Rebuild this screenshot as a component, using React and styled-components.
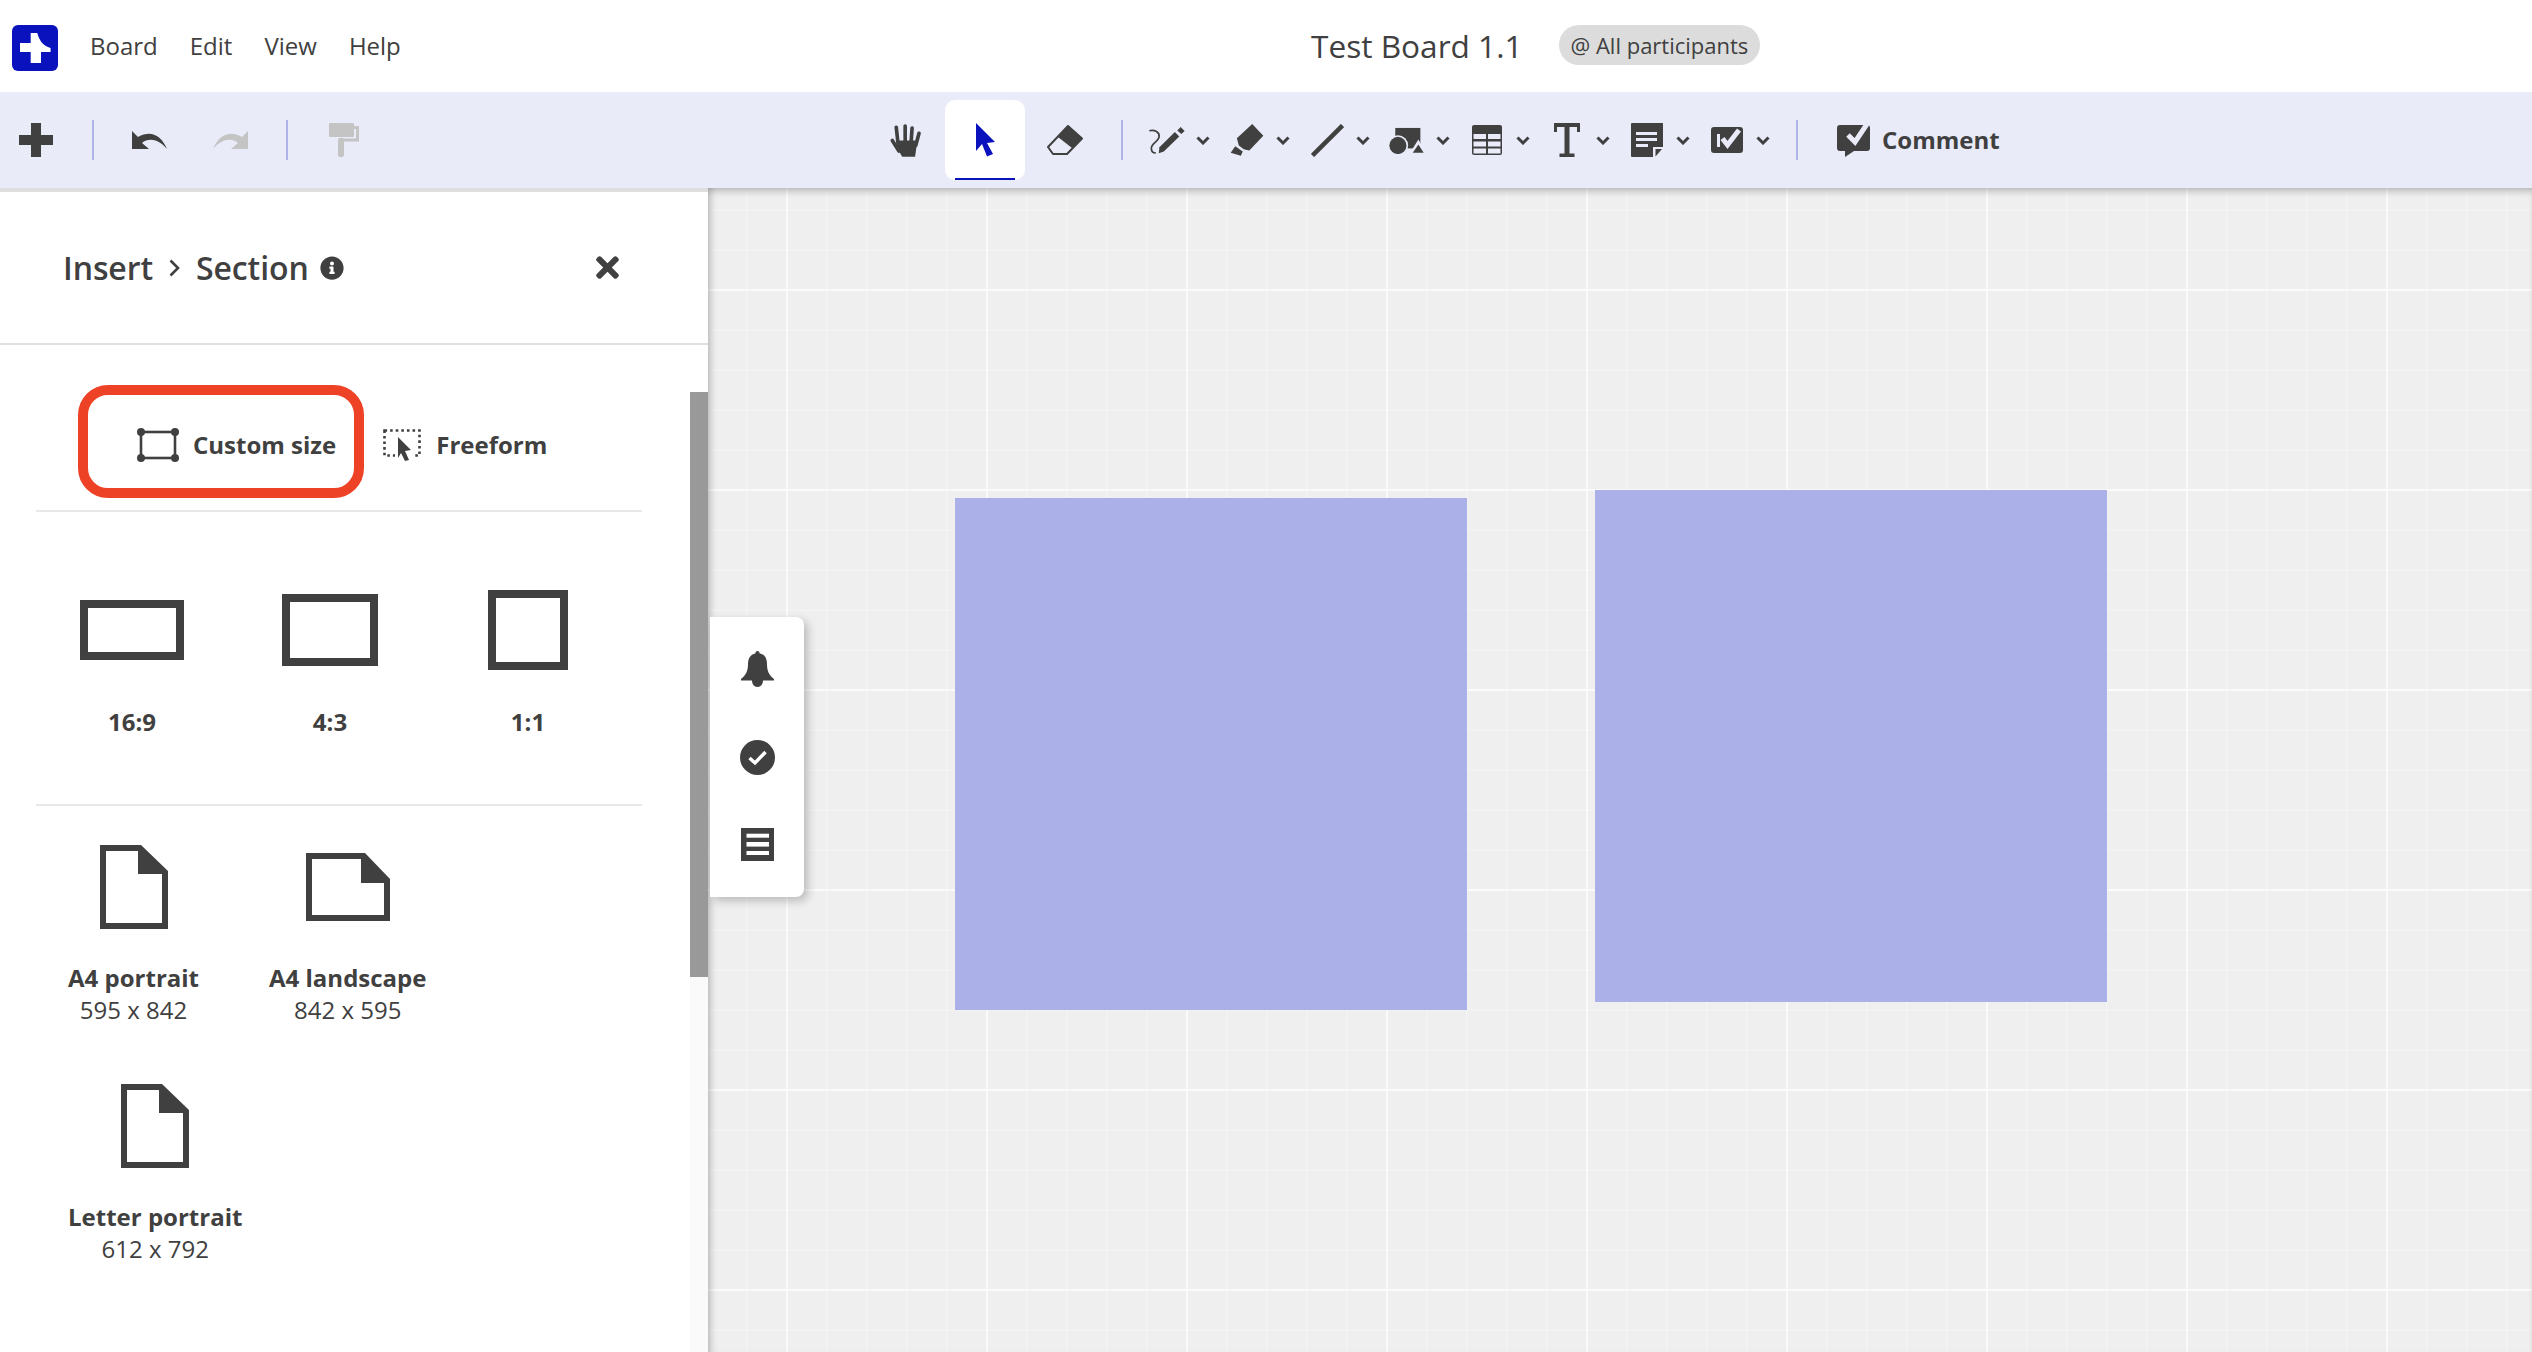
import React from "react";
import styled, { createGlobalStyle } from "styled-components";
import { FaInfoCircle, FaTimes } from "react-icons/fa";

const INK = "#404040";
const MUTED = "#c4c4c4";
const BAND = "#e9ebf9";
const ACCENT = "#0a12bd";
const RULE = "#aeb3e8";

const GlobalStyle = createGlobalStyle`
  html, body {
    margin: 0;
    padding: 0;
    background: #fff;
  }
  body {
    font-family: "Open Sans", "Liberation Sans", sans-serif;
    color: ${INK};
  }
`;

const Page = styled.div`
  width: 2532px;
  height: 1352px;
  display: flex;
  flex-direction: column;
  overflow: hidden;
`;

// barra de cima
const TopBar = styled.header`
  height: 92px;
  flex: none;
  display: flex;
  align-items: center;
  background: #fff;
`;

const Logo = styled.svg`
  margin-left: 12px;
  margin-top: 4px;
  flex: none;
`;

const Menu = styled.nav`
  display: flex;
  gap: 32px;
  margin-left: 32px;
  width: 1221px;
  flex: none;
`;

const MenuItem = styled.span`
  font-size: 24px;
  line-height: 32px;
`;

const BoardTitle = styled.h1`
  margin: -1px 0 0;
  font-size: 31.6px;
  line-height: 44px;
  font-weight: 400;
`;

const Pill = styled.span`
  margin-left: 36px;
  height: 40px;
  margin-top: -2px;
  padding: 0 12px;
  display: flex;
  align-items: center;
  border-radius: 20px;
  background: #dcdcdc;
  font-size: 22px;
`;

// barra de ferramentas
const ToolBar = styled.div`
  height: 96px;
  flex: none;
  display: flex;
  align-items: center;
  background: ${BAND};
  padding-left: 19px;
`;

const Tool = styled.div`
  flex: none;
  display: flex;
  align-items: center;
  gap: ${(p) => p.$gap || 0}px;
  margin-left: ${(p) => p.$ml || 0}px;
  color: ${(p) => (p.$off ? MUTED : INK)};
`;

const Rule = styled.span`
  flex: none;
  width: 2px;
  height: 40px;
  background: ${RULE};
  margin-left: ${(p) => p.$ml || 0}px;
`;

const SelectTool = styled.div`
  flex: none;
  position: relative;
  width: 80px;
  height: 80px;
  margin-left: ${(p) => p.$ml}px;
  border-radius: 10px;
  background: #fff;
  display: flex;
  align-items: center;
  justify-content: center;
  overflow: hidden;

  &::after {
    content: "";
    position: absolute;
    left: 10px;
    right: 10px;
    bottom: 0;
    height: 2.5px;
    background: ${ACCENT};
  }
`;

const CommentLabel = styled.span`
  font-size: 24px;
  font-weight: 700;
  line-height: 32px;
`;

// corpo
const Workspace = styled.div`
  flex: 1;
  display: flex;
  min-height: 0;
`;

const Panel = styled.aside`
  width: 708px;
  flex: none;
  display: flex;
  flex-direction: column;
  background: #fff;
  border-top: 4px solid #dedede;
  box-sizing: border-box;
`;

const PanelHead = styled.div`
  height: 151px;
  flex: none;
  display: flex;
  align-items: center;
  padding-left: 63px;
  border-bottom: 2px solid #e0e0e0;
`;

const Crumb = styled.span`
  font-size: 32px;
  letter-spacing: -0.1px;
  line-height: 44px;
  font-weight: 600;
`;

const CrumbArrow = styled.svg`
  margin: 0 16px 0 16px;
`;

const InfoIcon = styled(FaInfoCircle)`
  margin-left: 11px;
  font-size: 24px;
`;

const CloseIcon = styled(FaTimes)`
  margin-left: auto;
  margin-right: 84px;
  font-size: 33px;
`;

const PanelRow = styled.div`
  flex: 1;
  display: flex;
  min-height: 0;
`;

const PanelBody = styled.div`
  flex: 1;
  min-width: 0;
`;

const ScrollTrack = styled.div`
  width: 18px;
  flex: none;
  padding-top: 47px;
  display: flex;
  flex-direction: column;
`;

const ScrollThumb = styled.div`
  height: 585px;
  flex: none;
  background: #999;
`;

const ScrollRest = styled.div`
  flex: 1;
  background: #fafafa;
`;

const Tabs = styled.div`
  position: relative;
  height: 167px;
  margin: 0 48px 0 36px;
  display: flex;
  align-items: center;
  padding-left: 101px;
  padding-top: 35px;
  box-sizing: border-box;
  border-bottom: 2px solid #e8e8e8;
`;

const TabLabel = styled.span`
  font-size: 24px;
  font-weight: 700;
  line-height: 32px;
  margin-left: ${(p) => p.$ml}px;
`;

const TabIcon = styled.svg`
  flex: none;
  margin-left: ${(p) => p.$ml || 0}px;
`;

const Callout = styled.div`
  position: absolute;
  left: 42px;
  top: 40px;
  width: 286px;
  height: 113px;
  box-sizing: border-box;
  border: 10px solid #ee4226;
  border-radius: 30px;
`;

const RatioSection = styled.div`
  margin: 0 48px 0 36px;
  padding: 78px 0 66px;
  border-bottom: 2px solid #e8e8e8;
`;

const RatioGrid = styled.div`
  margin-left: -3px;
  display: grid;
  grid-template-columns: repeat(3, 198px);
`;

const RatioCell = styled.div`
  display: flex;
  flex-direction: column;
  align-items: center;
`;

const RatioSlot = styled.div`
  height: 80px;
  display: flex;
  align-items: center;
`;

const RatioShape = styled.div`
  width: ${(p) => p.$w}px;
  height: ${(p) => p.$h}px;
  box-sizing: border-box;
  border: 8px solid ${INK};
`;

const SizeName = styled.div`
  font-size: 24px;
  font-weight: 700;
  line-height: 32px;
  margin-top: ${(p) => p.$mt}px;
  white-space: nowrap;
`;

const SizeValue = styled.div`
  font-size: 24px;
  line-height: 32px;
  white-space: nowrap;
`;

const Papers = styled.div`
  padding: 39px 0 0 68px;
  display: flex;
  flex-wrap: wrap;
  gap: 58px 70px;
  width: 420px;
`;

const PaperCell = styled.div`
  display: flex;
  flex-direction: column;
  align-items: center;
`;

const PaperSlot = styled.div`
  height: 84px;
  display: flex;
  align-items: center;
`;

// area do quadro
const Canvas = styled.main`
  flex: 1;
  position: relative;
  overflow: hidden;
  background-color: #efefef;
  background-image:
    linear-gradient(to right, #fafafa 2px, transparent 2px),
    linear-gradient(to bottom, #fafafa 2px, transparent 2px),
    linear-gradient(to right, #f2f2f2 2px, transparent 2px),
    linear-gradient(to bottom, #f2f2f2 2px, transparent 2px);
  background-size: 200px 200px, 200px 200px, 40px 40px, 40px 40px;
  background-position: 78px 0, 0 101px, 38px 0, 0 21px;

  &::after {
    content: "";
    position: absolute;
    inset: 0;
    pointer-events: none;
    box-shadow:
      inset 0 6px 7px -3px rgba(0, 0, 0, 0.24),
      inset 8px 0 7px -5px rgba(0, 0, 0, 0.18);
  }
`;

const Sticky = styled.div`
  position: absolute;
  left: ${(p) => p.$x}px;
  top: ${(p) => p.$y}px;
  width: 512px;
  height: 512px;
  background: #acb0e8;
`;

const SideDock = styled.div`
  position: absolute;
  z-index: 1;
  left: 2px;
  top: 429px;
  width: 94px;
  height: 280px;
  padding-top: 34px;
  box-sizing: border-box;
  border-radius: 0 8px 8px 0;
  background: #fff;
  box-shadow: 4px 4px 10px rgba(0, 0, 0, 0.22);
  display: flex;
  flex-direction: column;
  align-items: center;
  gap: 53px;
`;

const Chevron = () => (
  <svg width="14" height="9" viewBox="0 0 14 9" fill="none">
    <path d="M1.5 1.5 7 7l5.5-5.5" stroke={INK} strokeWidth="3" />
  </svg>
);

const PaperIcon = ({ landscape }) =>
  landscape ? (
    <svg width="84" height="68" viewBox="0 0 84 68">
      <path
        fill={INK}
        fillRule="evenodd"
        d="M0 0H59L84 26V68H0ZM6 6V62H78V30H55V6Z"
      />
    </svg>
  ) : (
    <svg width="68" height="84" viewBox="0 0 68 84">
      <path
        fill={INK}
        fillRule="evenodd"
        d="M0 0H41L68 26V84H0ZM6 6V78H62V29H38V6Z"
      />
    </svg>
  );

const App = () => {
  return (
    <Page>
      <GlobalStyle />

      <TopBar>
        <Logo width="46" height="46" viewBox="0 0 46 46">
          <rect width="46" height="46" rx="6" fill={ACCENT} />
          <path
            fill="#fff"
            d="M18.7 8H25.3C27 15 31 21 38.6 23V27H29V38H18.7V27H8V18H18.7Z"
          />
        </Logo>
        <Menu>
          <MenuItem>Board</MenuItem>
          <MenuItem>Edit</MenuItem>
          <MenuItem>View</MenuItem>
          <MenuItem>Help</MenuItem>
        </Menu>
        <BoardTitle>Test Board 1.1</BoardTitle>
        <Pill>@ All participants</Pill>
      </TopBar>

      <ToolBar>
        <Tool>
          <svg width="34" height="34" viewBox="0 0 34 34">
            <path fill={INK} d="M12 0H22V12H34V22H22V34H12V22H0V12H12Z" />
          </svg>
        </Tool>
        <Rule $ml={39} />
        <Tool $ml={38}>
          <svg width="35" height="18" viewBox="0 0 35 18">
            <path
              fill={INK}
              d="M0 0V18H17L10 12C16 7 26 7 35 18C30 6 20 -2 6 6Z"
            />
          </svg>
        </Tool>
        <Tool $ml={46}>
          <svg width="35" height="18" viewBox="0 0 35 18">
            <path
              fill={MUTED}
              d="M35 0V18H18L25 12C19 7 9 7 0 18C5 6 15 -2 29 6Z"
            />
          </svg>
        </Tool>
        <Rule $ml={38} />
        <Tool $ml={41}>
          <svg width="30" height="34" viewBox="0 0 30 34">
            <rect width="25" height="14" rx="1" fill={MUTED} />
            <path
              d="M25 4.5H28.5V17H12"
              fill="none"
              stroke={MUTED}
              strokeWidth="3"
            />
            <rect x="9" y="15" width="6" height="19" rx="2" fill={MUTED} />
          </svg>
        </Tool>

        <Tool $ml={530}>
          <svg width="33" height="33" viewBox="78 100 96 100" fill="none">
            <g stroke={INK} strokeWidth="11" strokeLinecap="round">
              <path d="M104 165L98 110" />
              <path d="M125 155V106" />
              <path d="M143 155L146 112" />
              <path d="M157 165L167 128" />
              <path d="M106 182L86 150" />
            </g>
            <path fill={INK} d="M100 150H162L155 199H116L100 172Z" />
          </svg>
        </Tool>
        <SelectTool $ml={23}>
          <svg width="19" height="34" viewBox="0 0 19 34">
            <path
              fill={ACCENT}
              d="M0 0L19 19L11 20L17 31L11 33.5L6 21L0 28Z"
            />
          </svg>
        </SelectTool>
        <Tool $ml={22}>
          <svg width="36" height="30" viewBox="0 0 36 30">
            <path
              d="M21 1L35 13.5L20 29H6L1 22Z"
              fill="none"
              stroke={INK}
              strokeWidth="2"
              strokeLinejoin="round"
            />
            <path fill={INK} d="M21 1L35 13.5L25 23L11 12Z" />
          </svg>
        </Tool>
        <Rule $ml={38} />

        <Tool $ml={26} $gap={11}>
          <svg width="36" height="27" viewBox="28 35 107 80">
            <path
              d="M29 46C45 42 60 50 58 64C56 78 34 84 35 98C35 108 42 112 48 112"
              fill="none"
              stroke={INK}
              strokeWidth="5"
            />
            <path fill={INK} d="M57 113L59 95L105 50L118 63L72 108Z" />
            <path fill={INK} d="M112 45L122 35L134 47L124 56Z" />
          </svg>
          <Chevron />
        </Tool>
        <Tool $ml={20} $gap={12}>
          <svg width="34" height="32" viewBox="268 26 102 98">
            <path
              fill={INK}
              d="M335 26L369 62L326 107L309 103L294 92L288 70Z"
            />
            <path fill={INK} d="M283 94L306 110L300 123L269 114Z" />
          </svg>
          <Chevron />
        </Tool>
        <Tool $ml={21} $gap={12}>
          <svg width="33" height="33" viewBox="0 0 33 33">
            <path d="M1.5 31.5L31.5 1.5" stroke={INK} strokeWidth="4.5" />
          </svg>
          <Chevron />
        </Tool>
        <Tool $ml={19} $gap={12}>
          <svg width="35" height="27" viewBox="28 33 106 80">
            <rect x="47" y="35" width="76" height="62" fill={INK} />
            <circle cx="55" cy="88" r="31" fill={BAND} />
            <circle cx="55" cy="88" r="26" fill={INK} />
            <path fill={BAND} d="M117 70L90 113H142Z" />
            <path fill={INK} d="M117 85L100 110H133Z" />
          </svg>
          <Chevron />
        </Tool>
        <Tool $ml={22} $gap={14}>
          <svg width="30" height="30" viewBox="0 0 30 30">
            <rect width="30" height="30" rx="2" fill={INK} />
            {[9, 16.5, 23.5].map((y) => (
              <React.Fragment key={y}>
                <rect x="1.5" y={y} width="12.5" height="5" fill={BAND} />
                <rect x="16" y={y} width="12.5" height="5" fill={BAND} />
              </React.Fragment>
            ))}
          </svg>
          <Chevron />
        </Tool>
        <Tool $ml={24} $gap={16}>
          <svg width="26" height="34" viewBox="0 0 26 34">
            <path
              fill={INK}
              d="M0 0H26V9H23V4H15.5V30.5H20.5V34H5.5V30.5H10.5V4H3V9H0Z"
            />
          </svg>
          <Chevron />
        </Tool>
        <Tool $ml={21} $gap={13}>
          <svg width="32" height="34" viewBox="0 0 32 34">
            <path fill={INK} d="M0 1Q0 0 1 0H32V24H22V34H1Q0 34 0 33Z" />
            <path fill={INK} d="M24.5 33.5V26H31Z" />
            <rect x="5" y="9" width="21" height="3" fill={BAND} />
            <rect x="5" y="15" width="21" height="3" fill={BAND} />
            <rect x="5" y="21" width="12" height="3" fill={BAND} />
          </svg>
          <Chevron />
        </Tool>
        <Tool $ml={21} $gap={13}>
          <svg width="32" height="26" viewBox="0 0 32 26">
            <rect width="32" height="26" rx="3" fill={INK} />
            <rect x="6" y="7" width="3" height="13" fill={BAND} />
            <path
              d="M11.5 11.5L16.5 18L28 3"
              fill="none"
              stroke={BAND}
              strokeWidth="5"
            />
          </svg>
          <Chevron />
        </Tool>
        <Rule $ml={26} />
        <Tool $ml={39} $gap={12}>
          <svg width="33" height="33" viewBox="0 0 33 33">
            <path
              fill={INK}
              d="M3 1H30Q33 1 33 4V24Q33 27 30 27H17L8 33V27H3Q0 27 0 24V4Q0 1 3 1Z"
            />
            <path
              d="M11 11L18 18L30 0"
              fill="none"
              stroke={BAND}
              strokeWidth="5"
            />
          </svg>
          <CommentLabel>Comment</CommentLabel>
        </Tool>
      </ToolBar>

      <Workspace>
        <Panel>
          <PanelHead>
            <Crumb>Insert</Crumb>
            <CrumbArrow width="11" height="18" viewBox="0 0 11 18" fill="none">
              <path d="M1.5 1.5 9 9l-7.5 7.5" stroke={INK} strokeWidth="2.6" />
            </CrumbArrow>
            <Crumb>Section</Crumb>
            <InfoIcon />
            <CloseIcon />
          </PanelHead>

          <PanelRow>
            <PanelBody>
              <Tabs>
                <Callout />
                <TabIcon width="42" height="34" viewBox="0 0 42 34">
                  <rect
                    x="4"
                    y="4"
                    width="34"
                    height="26"
                    fill="none"
                    stroke={INK}
                    strokeWidth="2.6"
                  />
                  <circle cx="4" cy="4" r="4" fill={INK} />
                  <circle cx="38" cy="4" r="4" fill={INK} />
                  <circle cx="4" cy="30" r="4" fill={INK} />
                  <circle cx="38" cy="30" r="4" fill={INK} />
                </TabIcon>
                <TabLabel $ml={14}>Custom size</TabLabel>
                <TabIcon $ml={47} width="38" height="32" viewBox="0 0 38 32">
                  <rect
                    x="1.5"
                    y="1.5"
                    width="35"
                    height="25"
                    fill="none"
                    stroke={INK}
                    strokeWidth="2.6"
                    strokeDasharray="2.6 3"
                  />
                  <path fill="#fff" d="M12 5H31V32H12Z" />
                  <path fill={INK} d="M15 8L28 21L22 22L26 31L22 32L18 24L15 29Z" />
                </TabIcon>
                <TabLabel $ml={15}>Freeform</TabLabel>
              </Tabs>

              <RatioSection>
                <RatioGrid>
                  <RatioCell>
                    <RatioSlot>
                      <RatioShape $w={104} $h={60} />
                    </RatioSlot>
                    <SizeName $mt={36}>16:9</SizeName>
                  </RatioCell>
                  <RatioCell>
                    <RatioSlot>
                      <RatioShape $w={96} $h={72} />
                    </RatioSlot>
                    <SizeName $mt={36}>4:3</SizeName>
                  </RatioCell>
                  <RatioCell>
                    <RatioSlot>
                      <RatioShape $w={80} $h={80} />
                    </RatioSlot>
                    <SizeName $mt={36}>1:1</SizeName>
                  </RatioCell>
                </RatioGrid>
              </RatioSection>

              <Papers>
                <PaperCell>
                  <PaperSlot>
                    <PaperIcon />
                  </PaperSlot>
                  <SizeName $mt={33}>A4 portrait</SizeName>
                  <SizeValue>595 x 842</SizeValue>
                </PaperCell>
                <PaperCell>
                  <PaperSlot>
                    <PaperIcon landscape />
                  </PaperSlot>
                  <SizeName $mt={33}>A4 landscape</SizeName>
                  <SizeValue>842 x 595</SizeValue>
                </PaperCell>
                <PaperCell>
                  <PaperSlot>
                    <PaperIcon />
                  </PaperSlot>
                  <SizeName $mt={33}>Letter portrait</SizeName>
                  <SizeValue>612 x 792</SizeValue>
                </PaperCell>
              </Papers>
            </PanelBody>
            <ScrollTrack>
              <ScrollThumb />
              <ScrollRest />
            </ScrollTrack>
          </PanelRow>
        </Panel>

        <Canvas>
          <Sticky $x={247} $y={310} />
          <Sticky $x={887} $y={302} />
          <SideDock>
            <svg width="33" height="36" viewBox="0 0 33 36">
              <path
                fill={INK}
                d="M16.5 0C18 0 18.5 1 18.5 2.2C24 3.5 26 8 26 13C26 20 28 24 33 28V29.5H22C22 33 20 36 16.5 36C13 36 11 33 11 29.5H0V28C5 24 7 20 7 13C7 8 9 3.5 14.5 2.2C14.5 1 15 0 16.5 0Z"
              />
            </svg>
            <svg width="35" height="35" viewBox="0 0 35 35">
              <circle cx="17.5" cy="17.5" r="17.5" fill={INK} />
              <path
                d="M9.5 18L15 23L25.5 12"
                fill="none"
                stroke="#fff"
                strokeWidth="3.4"
              />
            </svg>
            <svg width="33" height="33" viewBox="0 0 33 33">
              <rect width="33" height="33" fill={INK} />
              <rect x="5.5" y="5.7" width="22.5" height="4" fill="#fff" />
              <rect x="5.5" y="14" width="22.5" height="4.6" fill="#fff" />
              <rect x="5.5" y="23" width="22.5" height="4" fill="#fff" />
            </svg>
          </SideDock>
        </Canvas>
      </Workspace>
    </Page>
  );
};

export default App;
